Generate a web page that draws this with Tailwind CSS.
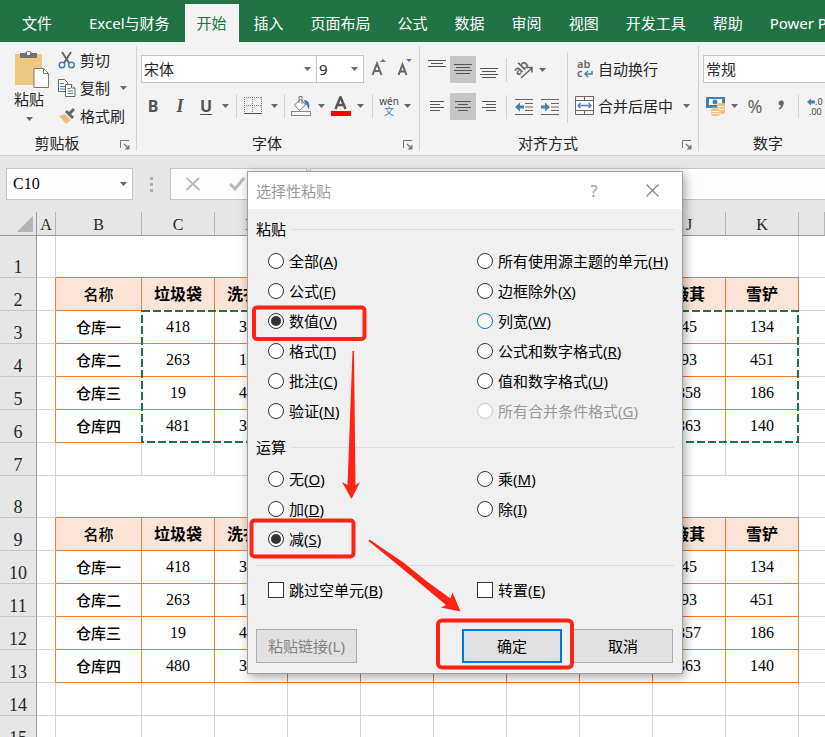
<!DOCTYPE html>
<html lang="zh-CN">
<head>
    <meta charset="UTF-8">
    <meta name="viewport" content="width=device-width, initial-scale=1.0">
    <title>选择性粘贴</title>
    <script src="https://cdn.jsdelivr.net/npm/@tailwindcss/browser@4"></script>
</head>

<body class="relative flex h-screen flex-col overflow-hidden bg-[#e6e6e6] font-['Noto_Sans','Noto_Sans_CJK_SC',sans-serif] text-[15px] leading-5 text-[#262626]">

    <!-- arrow shared by all drop-downs -->
    <svg class="hidden">
        <symbol id="down" viewBox="0 0 7 4"><path d="M0 0h7L3.5 4z" fill="#666"/></symbol>
        <symbol id="launcher" viewBox="0 0 10 10"><path d="M.5 8V.5H9" fill="none" stroke="#777"/><path d="M4 4l4 4" stroke="#777" stroke-width="1.2"/><path d="M9.500 4.500v5h-5z" fill="#777"/></symbol>
    </svg>

    <!-- tabs -->
    <nav class="flex h-[42px] shrink-0 items-end gap-[3px] overflow-hidden whitespace-nowrap bg-[#217346] pl-[10px] text-white">
        <a href="#" class="mr-[10px] flex h-[38px] items-center px-3">文件</a>
        <a href="#" class="flex h-[38px] items-center px-3">Excel与财务</a>
        <a href="#" class="flex h-[38px] items-center bg-[#f3f3f3] px-3 text-[#217346]">开始</a>
        <a href="#" class="flex h-[38px] items-center px-3">插入</a>
        <a href="#" class="flex h-[38px] items-center px-3">页面布局</a>
        <a href="#" class="flex h-[38px] items-center px-3">公式</a>
        <a href="#" class="flex h-[38px] items-center px-3">数据</a>
        <a href="#" class="flex h-[38px] items-center px-3">审阅</a>
        <a href="#" class="flex h-[38px] items-center px-3">视图</a>
        <a href="#" class="flex h-[38px] items-center px-3">开发工具</a>
        <a href="#" class="flex h-[38px] items-center px-3">帮助</a>
        <a href="#" class="flex h-[38px] items-center px-3">Power Pivot</a>
    </nav>

    <!-- ribbon -->
    <div class="flex h-[114px] shrink-0 overflow-hidden whitespace-nowrap border-b border-[#d2d2d2] bg-[#f3f3f3] py-1">

        <section class="flex w-[137px] shrink-0 flex-col border-r border-[#d2d2d2]">
            <div class="flex flex-1">
                <button class="flex w-[58px] flex-col items-center pt-1">
                    <svg class="ml-1 h-[39px] w-[35px]" viewBox="0 0 35 39">
                        <rect x="1" y="4" width="27" height="31" fill="#edc87e"/>
                        <path d="M6 8V3h5a4 4 0 0 1 7 0h5v5z" fill="#737373"/><rect x="13" y="2" width="3" height="3" fill="#f3f3f3"/>
                        <path d="M20 18.500h9.500l5 5v14h-14.500z" fill="#fff" stroke="#777"/><path d="M29.500 18.500v5h5" fill="none" stroke="#777"/>
                    </svg>
                    <span>粘贴</span>
                    <svg class="mt-2 h-1 w-[7px]"><use href="#down"/></svg>
                </button>
                <div class="flex flex-col">
                    <button class="flex h-7 items-center gap-1">
                        <svg class="size-[18px]" viewBox="0 0 18 18" fill="none"><path d="M4 1l7 11M13 1L6 12" stroke="#666" stroke-width="2"/><circle cx="4" cy="14" r="2.800" stroke="#4a7fb5" stroke-width="1.500"/><circle cx="13.500" cy="14" r="2.800" stroke="#4a7fb5" stroke-width="1.500"/></svg>
                        剪切
                    </button>
                    <button class="flex h-7 items-center gap-1">
                        <svg class="size-[18px]" viewBox="0 0 18 18" fill="#fff"><path d="M.5.5h6l3 3v9h-9z" stroke="#666"/><path d="M2 4.500h4M2 7.500h5M2 10h5" stroke="#4a7fb5"/><path d="M7.500 5.500h6l3.500 3.500v8.500h-9.500z" stroke="#666"/><path d="M13.500 5.500V9H17" stroke="#666"/><path d="M9.500 9.500h3M9.500 12h5.500M9.500 14.500h5.500" stroke="#4a7fb5"/></svg>
                        复制
                        <svg class="ml-1.5 h-1 w-[7px]"><use href="#down"/></svg>
                    </button>
                    <button class="flex h-7 items-center gap-1">
                        <svg class="size-[18px]" viewBox="0 0 18 18"><path d="M1 9l6-2 6 6-5 4z" fill="#edc07a"/><path d="M7 5l2-2 7 7-2 2z" fill="#666"/><path d="M11.500 6.500L16 2" stroke="#666" stroke-width="3"/></svg>
                        格式刷
                    </button>
                </div>
            </div>
            <div class="flex h-4 items-center">
                <span class="flex-1 text-center">剪贴板</span>
                <button class="flex w-[22px] justify-center" aria-label="剪贴板设置"><svg class="mt-1 size-[10px]"><use href="#launcher"/></svg></button>
            </div>
        </section>

        <section class="flex w-[283px] shrink-0 flex-col border-r border-[#d2d2d2]">
            <div class="flex flex-1 flex-col gap-2 pt-[9px]">
                <div class="flex h-7 items-center pl-1">
                    <label class="relative block">
                        <select aria-label="字体" class="h-7 w-44 appearance-none border border-[#c6c6c6] bg-white pl-0.5"><option>宋体</option></select>
                        <svg class="pointer-events-none absolute right-1.5 top-3 h-1 w-[7px]"><use href="#down"/></svg>
                    </label>
                    <label class="relative -ml-px block">
                        <select aria-label="字号" class="h-7 w-12 appearance-none border border-[#c6c6c6] bg-white pl-0.5"><option>9</option></select>
                        <svg class="pointer-events-none absolute right-1.5 top-3 h-1 w-[7px]"><use href="#down"/></svg>
                    </label>
                    <button class="ml-0.5 flex w-[26px] justify-center" aria-label="增大字号"><svg class="h-5 w-4" viewBox="0 0 16 20"><path d="M1.500 16L6 4.500 10.500 16M3 12h6" fill="none" stroke="#666" stroke-width="2"/><path d="M9 3l3-3 3 3z" fill="#4a7fb5"/></svg></button>
                    <button class="flex w-[26px] justify-center" aria-label="减小字号"><svg class="h-5 w-4" viewBox="0 0 16 20"><path d="M1.500 16L5.500 5.500 9.500 16M3 12.500h5" fill="none" stroke="#666" stroke-width="2"/><path d="M9 0l3 3 3-3z" fill="#4a7fb5"/></svg></button>
                </div>
                <div class="flex h-[30px] items-center text-[#555]">
                    <button class="ml-1 w-6 text-[16px] font-bold">B</button>
                    <button class="w-[30px] font-['Liberation_Serif',serif] text-[18px] font-bold italic">I</button>
                    <button class="w-[22px] text-[16px] font-bold underline underline-offset-2">U</button>
                    <button class="flex w-4 justify-center" aria-label="下划线"><svg class="h-1 w-[7px]"><use href="#down"/></svg></button>
                    <i class="mx-[3px] h-6 w-px bg-[#d2d2d2]"></i>
                    <button class="flex w-[26px] justify-center" aria-label="边框"><svg class="size-[18px]" viewBox="0 0 18 18" fill="none" stroke="#777"><path d="M.5 0v17M8.500 0v17M17.500 0v17M0 .5h17M0 8.500h17" stroke-dasharray="1 1"/><path d="M0 16.500h18" stroke="#555"/></svg></button>
                    <button class="flex w-4 justify-center" aria-label="边框选项"><svg class="h-1 w-[7px]"><use href="#down"/></svg></button>
                    <i class="mx-0.5 h-6 w-px bg-[#d2d2d2]"></i>
                    <button class="flex w-[29px] justify-center" aria-label="填充颜色"><svg class="h-5 w-[21px]" viewBox="0 0 21 20" fill="none"><path d="M3.500 9l6-6 5 6-6 5.500z" fill="#fff" stroke="#777"/><path d="M8 7V.5h3V8" stroke="#777"/><path d="M13 4c4 0 6.500 3 5 9-2-1-1-4-4-5z" fill="#4a7fb5"/><rect x=".5" y="15.500" width="19" height="4" fill="#fff" stroke="#888"/></svg></button>
                    <button class="flex w-[11px] justify-center" aria-label="填充选项"><svg class="h-1 w-[7px]"><use href="#down"/></svg></button>
                    <button class="flex w-7 justify-center" aria-label="字体颜色"><svg class="h-5 w-5" viewBox="0 0 20 20"><path d="M4.500 13L9.500 1l5 12M6.500 9h6.500" fill="none" stroke="#555" stroke-width="2.400"/><rect y="15" width="20" height="5" fill="red"/></svg></button>
                    <button class="flex w-[11px] justify-center" aria-label="颜色选项"><svg class="h-1 w-[7px]"><use href="#down"/></svg></button>
                    <i class="ml-1.5 mr-1 h-6 w-px bg-[#d2d2d2]"></i>
                    <button class="flex w-6 flex-col items-center text-[10px] leading-[10px] text-[#444]" aria-label="拼音指南"><span>wén</span><span class="text-[#4a7fb5]">文</span></button>
                    <button class="flex w-3 justify-center" aria-label="拼音选项"><svg class="h-1 w-[7px]"><use href="#down"/></svg></button>
                </div>
            </div>
            <div class="flex h-4 items-center">
                <span class="flex-1 text-center">字体</span>
                <button class="flex w-[22px] justify-center" aria-label="字体设置"><svg class="mt-1 size-[10px]"><use href="#launcher"/></svg></button>
            </div>
        </section>

        <section class="flex w-[279px] shrink-0 flex-col border-r border-[#d2d2d2]">
            <div class="flex flex-1">
                <div class="flex w-[147px] flex-col gap-[10px] pt-[10px]">
                    <div class="flex h-[27px] items-center">
                        <button class="ml-1 flex h-[27px] w-[26px] items-center justify-center" aria-label="顶端对齐"><svg class="h-[27px] w-[18px]" viewBox="0 0 18 27" stroke="#555"><path d="M0 4.500h18M3 7.500h12M0 10.500h18"/></svg></button>
                        <button class="flex h-[27px] w-[26px] items-center justify-center bg-[#c6c6c6]" aria-label="垂直居中"><svg class="h-[27px] w-[18px]" viewBox="0 0 18 27" stroke="#555"><path d="M0 8.500h18M2 11.500h14M0 14.500h18M2 17.500h14"/></svg></button>
                        <button class="flex h-[27px] w-[26px] items-center justify-center" aria-label="底端对齐"><svg class="h-[27px] w-[18px]" viewBox="0 0 18 27" stroke="#555"><path d="M0 12.500h18M2 15.500h14M0 18.500h18M2 21.500h14"/></svg></button>
                        <i class="mx-1 h-6 w-px bg-[#d2d2d2]"></i>
                        <button class="flex w-[26px] justify-center" aria-label="方向"><svg class="h-5 w-5" viewBox="0 0 20 20"><text x="0" y="14" transform="rotate(-45 5 10)" font-size="13" font-weight="600" fill="#666">ab</text><path d="M7 18L18 8M13 7.500h5v5" fill="none" stroke="#666" stroke-width="1.500"/></svg></button>
                        <button class="flex w-[11px] justify-center" aria-label="方向选项"><svg class="h-1 w-[7px]"><use href="#down"/></svg></button>
                    </div>
                    <div class="flex h-[27px] items-center">
                        <button class="ml-1 flex h-[27px] w-[26px] items-center justify-center" aria-label="左对齐"><svg class="h-[27px] w-[14px]" viewBox="0 0 14 27" stroke="#555"><path d="M0 8.500h14M0 11.500h10M0 14.500h14M0 17.500h10"/></svg></button>
                        <button class="flex h-[27px] w-[26px] items-center justify-center bg-[#c6c6c6]" aria-label="居中"><svg class="h-[27px] w-4" viewBox="0 0 16 27" stroke="#555"><path d="M0 8.500h16M3 11.500h10M0 14.500h16M3 17.500h10"/></svg></button>
                        <button class="flex h-[27px] w-[26px] items-center justify-center" aria-label="右对齐"><svg class="h-[27px] w-[14px]" viewBox="0 0 14 27" stroke="#555"><path d="M0 8.500h14M4 11.500h10M0 14.500h14M4 17.500h10"/></svg></button>
                        <i class="mx-1 h-6 w-px bg-[#d2d2d2]"></i>
                        <button class="flex w-[26px] justify-center" aria-label="减少缩进"><svg class="h-4 w-[18px]" viewBox="0 0 18 16"><path d="M0 .5h18M10 4.500h8M10 8h8M10 11.500h8M0 15.500h18" stroke="#666"/><path d="M0 8l5-4.500v3h4v3H5v3z" fill="#4a7fb5"/></svg></button>
                        <button class="flex w-[26px] justify-center" aria-label="增加缩进"><svg class="h-4 w-[18px]" viewBox="0 0 18 16"><path d="M0 .5h18M10 4.500h8M10 8h8M10 11.500h8M0 15.500h18" stroke="#666"/><path d="M9 8L4 3.500v3H0v3h4v3z" fill="#4a7fb5"/></svg></button>
                    </div>
                </div>
                <i class="mt-1.5 h-[71px] w-px bg-[#d2d2d2]"></i>
                <div class="flex flex-col gap-[10px] pl-[7px] pt-[9px]">
                    <button class="flex h-[27px] items-center gap-1">
                        <svg class="h-5 w-[19px]" viewBox="0 0 19 20"><text x="2" y="9" font-size="11" font-weight="600" fill="#666">ab</text><text x="2" y="18" font-size="11" font-weight="600" fill="#666">c</text><path d="M17 12v3h-6M13 12l-3 3 3 3" fill="none" stroke="#4a7fb5" stroke-width="1.500"/></svg>
                        自动换行
                    </button>
                    <button class="flex h-[27px] items-center gap-1">
                        <svg class="h-5 w-[19px]" viewBox="0 0 19 20" fill="none"><path d="M.5.5h18v18H.5zM.5 4.500h18M.5 14.500h18M9.500 0v4M9.500 15v4" stroke="#666"/><rect x="1" y="5" width="17" height="9" fill="#fff"/><path d="M3 9.500h13M5.500 7L3 9.500 5.500 12M13.500 7L16 9.500 13.500 12" stroke="#4a7fb5" stroke-width="1.300"/></svg>
                        合并后居中
                        <svg class="ml-1.5 h-1 w-[7px]"><use href="#down"/></svg>
                    </button>
                </div>
            </div>
            <div class="flex h-4 items-center">
                <span class="flex-1 text-center">对齐方式</span>
                <button class="flex w-[22px] justify-center" aria-label="对齐设置"><svg class="mt-1 size-[10px]"><use href="#launcher"/></svg></button>
            </div>
        </section>

        <section class="flex w-[160px] shrink-0 flex-col">
            <div class="flex flex-1 flex-col gap-2 pl-1 pt-[9px]">
                <select aria-label="数字格式" class="h-7 w-[150px] appearance-none border border-[#c6c6c6] bg-white pl-0.5"><option>常规</option></select>
                <div class="flex h-[30px] items-center text-[#666]">
                    <button class="ml-[3px] flex" aria-label="会计数字格式"><svg class="h-5 w-5" viewBox="0 0 20 20"><path d="M0 1h19v11H0z" fill="#4a7fb5"/><path d="M3 3h13v6H3z" fill="#fff"/><circle cx="9" cy="6" r="2.500" fill="#4a7fb5"/><rect x="11" y="7" width="8" height="11" rx="2" fill="#edc07a"/><rect x="5" y="12" width="9" height="8" rx="2" fill="#edc07a" stroke="#f3f3f3" stroke-width=".6"/><path d="M12 10.500h6M12 13.500h6M6 15.500h7M6 17.500h7" stroke="#fff" stroke-width=".8"/></svg></button>
                    <button class="ml-[3px] flex w-[11px] justify-center" aria-label="货币选项"><svg class="h-1 w-[7px]"><use href="#down"/></svg></button>
                    <button class="ml-0.5 w-[26px] text-[18px]">%</button>
                    <button class="flex w-[26px] justify-center" aria-label="千位分隔样式"><svg class="h-5 w-2" viewBox="0 0 8 20"><path d="M1.500 7a2.700 2.700 0 1 1 5 1.500C6 11 4.500 12.500 2 13.500l-.5-1C3 11.500 4 10.500 4 9.500 2.500 9.500 1.500 8.500 1.500 7z" fill="#666"/></svg></button>
                    <i class="ml-1 mr-2 h-6 w-px bg-[#d2d2d2]"></i>
                    <button class="flex" aria-label="增加小数位数"><svg class="h-5 w-5" viewBox="0 0 20 20"><path d="M0 6l4-3.500v2h4v3H4v2z" fill="#4a7fb5"/><text x="8" y="9" font-size="9" fill="#444">.0</text><text x="2" y="19" font-size="9" fill="#444">.00</text></svg></button>
                </div>
            </div>
            <div class="flex h-4 items-center pr-[22px]">
                <span class="flex-1 text-center">数字</span>
            </div>
        </section>
    </div>

    <!-- formula bar -->
    <div class="flex shrink-0 py-3 pl-1.5">
        <label class="relative block">
            <input aria-label="名称框" value="C10" class="block h-8 w-[127px] border border-[#c6c6c6] bg-[#fdfdfd] pl-1.5 font-['Liberation_Serif',serif] text-[16px] text-black">
            <svg class="absolute right-1.5 top-3.5 h-1 w-[7px]"><use href="#down"/></svg>
        </label>
        <div class="flex w-[37px] flex-col items-center justify-center gap-[3px]">
            <i class="size-[3px] bg-[#b0b0b0]"></i><i class="size-[3px] bg-[#b0b0b0]"></i><i class="size-[3px] bg-[#b0b0b0]"></i>
        </div>
        <div class="flex h-8 w-[137px] items-center gap-7 border border-[#c6c6c6] bg-[#fdfdfd] pl-3.5">
            <button aria-label="取消输入"><svg class="h-4 w-4" viewBox="0 0 16 16"><path d="M1.500 2l13 12M14 2L1.500 14" stroke="#bbb" stroke-width="2"/></svg></button>
            <button aria-label="输入"><svg class="h-4 w-4" viewBox="0 0 16 16"><path d="M1 8l5 5L15 2" fill="none" stroke="#bbb" stroke-width="3"/></svg></button>
        </div>
        <input aria-label="编辑栏" class="ml-[3px] h-8 min-w-0 flex-1 border-y border-l border-[#c6c6c6] bg-[#fdfdfd]">
    </div>

    <!-- sheet -->
    <div class="min-h-0 flex-1 overflow-hidden bg-white">
        <table class="w-full table-fixed border-separate border-spacing-0 text-center text-black">
            <colgroup>
                <col class="w-[37px]"><col class="w-[19px]"><col class="w-[86px]">
                <col class="w-[73px]"><col class="w-[73px]"><col class="w-[73px]"><col class="w-[73px]"><col class="w-[73px]">
                <col class="w-[73px]"><col class="w-[73px]"><col class="w-[73px]"><col class="w-[73px]"><col>
            </colgroup>
            <thead id="sheet-head"></thead>
            <tbody id="sheet-body"></tbody>
        </table>
    </div>

    <!-- paste special dialog -->
    <form role="dialog" aria-label="选择性粘贴" class="absolute left-[247px] top-[171px] w-[436px] whitespace-nowrap border border-[#a0a0a0] bg-[#f0f0f0] text-black shadow-[2px_3px_10px_rgba(0,0,0,0.35)]">
        <div class="flex h-[37px] items-center bg-white pl-2 pr-px text-[#999]">
            <h1 class="flex-1">选择性粘贴</h1>
            <button type="button" class="w-[58px] text-center text-[16px]">?</button>
            <button type="button" class="flex w-[58px] justify-center" aria-label="关闭"><svg class="size-[13px]" viewBox="0 0 13 13"><path d="M.5.5l12 12M12.500.5l-12 12" stroke="#888" stroke-width="1.200"/></svg></button>
        </div>

        <div class="px-2 pb-[10px] pt-[9px]">
            <div role="radiogroup" aria-label="粘贴方式">
                <div class="flex h-[22px] items-center gap-[5px]">粘贴<i class="h-px flex-1 bg-[#dcdcdc]"></i></div>
                <div class="mt-1.5 grid grid-flow-col grid-cols-[209px_1fr] grid-rows-6 pl-3" id="paste-options"></div>
            </div>
            <div role="radiogroup" aria-label="运算方式" class="mt-[10px]">
                <div class="flex h-[22px] items-center gap-[5px]">运算<i class="h-px flex-1 bg-[#dcdcdc]"></i></div>
                <div class="mt-1.5 grid grid-flow-col grid-cols-[209px_1fr] grid-rows-3 pl-3" id="math-options"></div>
            </div>
            <hr class="mt-[11px] border-[#dcdcdc]">
            <div class="mt-[9px] grid grid-cols-[209px_1fr] pl-3">
                <label class="flex h-[30px] items-center gap-[5px]"><input type="checkbox" class="size-4 appearance-none border border-[#333] bg-white"><span>跳过空单元(<u>B</u>)</span></label>
                <label class="flex h-[30px] items-center gap-[5px]"><input type="checkbox" class="size-4 appearance-none border border-[#333] bg-white"><span>转置(<u>E</u>)</span></label>
            </div>
            <div class="mt-6 flex pr-px">
                <button type="button" disabled class="h-[34px] w-[101px] border border-[#adadad] bg-[#e1e1e1] text-[#838383]">粘贴链接(L)</button>
                <button type="button" class="ml-auto h-[34px] w-[100px] border-2 border-[#0078d7] bg-[#e1e1e1]">确定</button>
                <button type="button" class="ml-[11px] h-[34px] w-[100px] border border-[#adadad] bg-[#e1e1e1]">取消</button>
            </div>
        </div>
    </form>

    <!-- red marks over the dialog -->
    <svg class="pointer-events-none absolute left-0 top-0 h-[737px] w-[825px]" viewBox="0 0 825 737">
        <g fill="none" stroke="#ff2314" stroke-width="4">
            <rect x="254" y="307.500" width="110.500" height="31.500" rx="3"/>
            <rect x="251.500" y="520.500" width="102" height="36" rx="3"/>
            <rect x="438" y="620.500" width="134" height="47" rx="4"/>
        </g>
        <path d="M352.500 351h1.500l1.500 134 4.500-3-8.500 17-9.500-17 5.500 3z" fill="#ff2314"/>
        <path d="M369.500 539.500L403.500 562.500 427 581.500 450.500 598.500 452.500 592.500 460.500 611.500 441 607.500 446 605 407 572.500 368.500 541z" fill="#ff2314"/>
    </svg>

    <script>
        // letters over the columns
        const letters = ['A', 'B', 'C', 'D', 'E', 'F', 'G', 'H', 'I', 'J', 'K', ''];

        // B, C, D, J, K of each block
        const header = ['名称', '垃圾袋', '洗衣粉', '簸萁', '雪铲'];
        const before = [
            ['仓库一', 418, 345, 45, 134],
            ['仓库二', 263, 142, 93, 451],
            ['仓库三', 19, 427, 358, 186],
            ['仓库四', 481, 363, 363, 140]
        ];
        const after = [
            ['仓库一', 418, 345, 45, 134],
            ['仓库二', 263, 142, 93, 451],
            ['仓库三', 19, 427, 357, 186],
            ['仓库四', 480, 363, 363, 140]
        ];

        // row number -> what the row holds
        const rows = {
            1: 'merged', 2: header, 3: before[0], 4: before[1], 5: before[2], 6: before[3],
            8: 'merged', 9: header, 10: after[0], 11: after[1], 12: after[2], 13: after[3]
        };

        // dashed frame round the copied range C3:K6
        const ants = `<svg class="absolute -left-px -top-px h-[133px] w-[658px]" viewBox="0 0 658 133">
            <rect x="1" y="1" width="656" height="131" fill="none" stroke="#fff" stroke-width="2"/>
            <rect x="1" y="1" width="656" height="131" fill="none" stroke="#217346" stroke-width="2" stroke-dasharray="8 3"/></svg>`;

        document.getElementById('sheet-head').innerHTML = `<tr>
            <th class="h-6 border-b border-r border-[#999] bg-[#e6e6e6] p-0"><svg class="ml-4 h-4 w-[17px]" viewBox="0 0 17 16"><path d="M17 0v16H1z" fill="#b4b4b4"/></svg></th>
            ${letters.map(l => `<th class="h-6 border-b border-r border-b-[#999] border-r-[#b4b4b4] bg-[#e6e6e6] p-0 pt-[3px] font-['Liberation_Serif',serif] text-[16px] font-normal leading-5 text-[#262626]">${l}</th>`).join('')}
        </tr>`;

        function cell(value, index, isHeader, marked) {
            const text = isHeader
                ? (index === 0 ? 'bg-[#fce4d6] font-medium' : 'bg-[#fce4d6] text-[16px] font-bold')
                : (index === 0 ? 'font-medium' : "font-['Liberation_Serif',serif] text-[16px]");
            return `<td class="${marked ? 'relative' : ''} border-b border-r border-[#ed7d31] p-0 ${text}">${value}${marked ? ants : ''}</td>`;
        }

        let body = '';
        for (let n = 1; n <= 15; n++) {
            const row = rows[n];
            const tall = n === 1 || n === 8;
            body += `<tr class="${tall ? 'h-[42px]' : 'h-[33px]'}">
                <th class="border-b border-r border-b-[#c6c6c6] border-r-[#999] bg-[#e6e6e6] p-0 align-bottom font-['Liberation_Serif',serif] text-[18px] font-normal leading-5 text-[#262626]">${n}</th>`;

            if (row === 'merged') {
                body += `<td class="border-b border-r border-[#d4d4d4] p-0"></td>
                    <td colspan="10" class="border-b border-r border-b-[#ed7d31] border-r-[#d4d4d4] p-0"></td>`;
            } else if (row) {
                body += `<td class="border-b border-r border-b-[#d4d4d4] border-r-[#ed7d31] p-0"></td>`;
                // E to I stay empty
                const values = [row[0], row[1], row[2], '', '', '', '', '', row[3], row[4]];
                body += values.map((value, i) => cell(value, i, row === header, n === 3 && i === 1)).join('');
            } else {
                body += '<td class="border-b border-r border-[#d4d4d4] p-0"></td>'.repeat(11);
            }
            body += '<td class="border-b border-[#d4d4d4] p-0"></td></tr>';
        }
        document.getElementById('sheet-body').innerHTML = body;

        // [label, key, state]
        const pasteOptions = [
            ['全部', 'A'], ['公式', 'F'], ['数值', 'V', 'checked'], ['格式', 'T'], ['批注', 'C'], ['验证', 'N'],
            ['所有使用源主题的单元', 'H'], ['边框除外', 'X'], ['列宽', 'W', 'hot'], ['公式和数字格式', 'R'], ['值和数字格式', 'U'], ['所有合并条件格式', 'G', 'disabled']
        ];
        const mathOptions = [['无', 'O'], ['加', 'D'], ['减', 'S', 'checked'], ['乘', 'M'], ['除', 'I']];

        function radios(id, options) {
            document.getElementById(id).innerHTML = options.map(([label, key, state]) => {
                const border = state === 'hot' ? 'border-[#0078d7]' : state === 'disabled' ? 'border-[#c6c6c6]' : 'border-[#333]';
                return `<label class="flex h-[30px] items-center gap-[5px] ${state === 'disabled' ? 'text-[#999]' : ''}">
                    <input type="radio" name="${id}" ${state === 'hot' ? '' : state || ''} class="grid size-4 shrink-0 appearance-none place-content-center rounded-full border bg-white before:size-[10px] before:rounded-full checked:before:bg-[#333] ${border}">
                    <span>${label}(<u>${key}</u>)</span>
                </label>`;
            }).join('');
        }

        radios('paste-options', pasteOptions);
        radios('math-options', mathOptions);
    </script>
</body>
</html>
